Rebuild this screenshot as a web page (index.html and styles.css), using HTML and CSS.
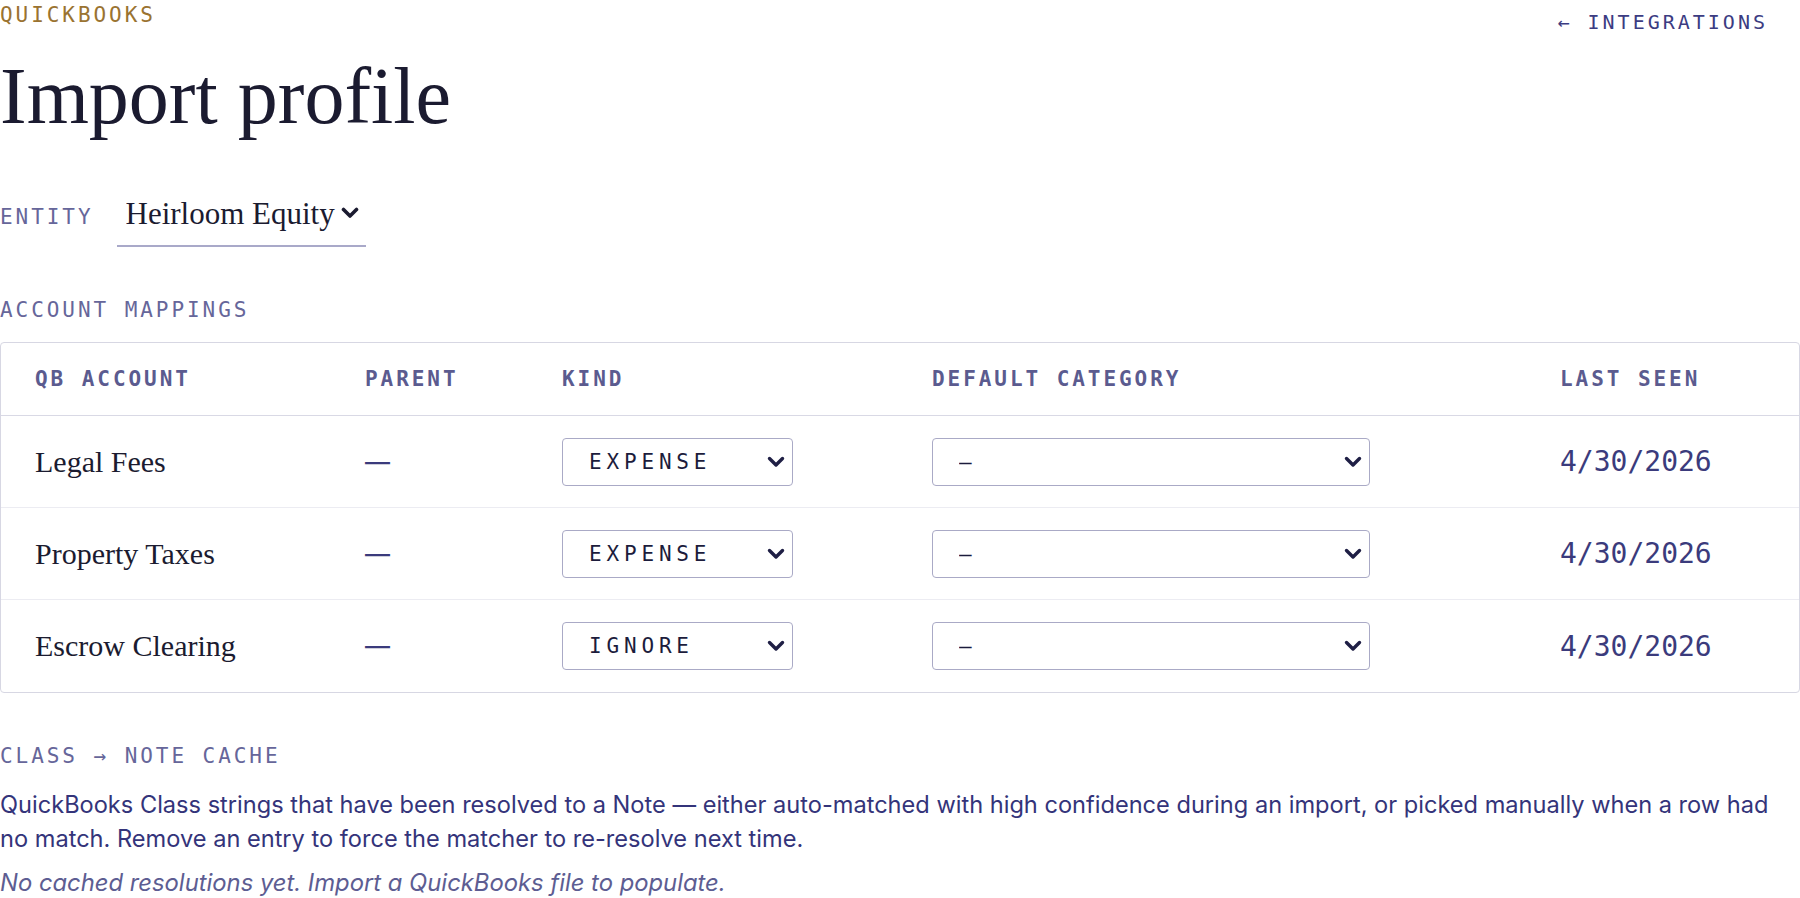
FILE: index.html
```html
<!DOCTYPE html>
<html>
<head>
<meta charset="utf-8">
<meta name="viewport" content="width=device-width, initial-scale=1">
<title>Import profile</title>
<link rel="stylesheet" href="styles.css">
</head>
<body>
<div class="page">

  <div class="topbar">
    <div class="eyebrow">QuickBooks</div>
    <a class="back-link" href="#">&larr; Integrations</a>
  </div>
  <h1 class="title">Import profile</h1>

  <div class="entity">
    <span class="label">Entity</span>
    <label class="entity__select">
      <select>
        <option>Heirloom Equity</option>
      </select>
      <svg class="chevron" width="18" height="12" viewBox="0 0 18 12"><path d="M2.5 2.5 L9 9 L15.5 2.5" fill="none" stroke="#1b1b30" stroke-width="3.6" stroke-linecap="round" stroke-linejoin="round"/></svg>
    </label>
  </div>

  <div class="label section-label">Account mappings</div>
  <table class="mappings">
    <thead>
      <tr>
        <th class="col-account">QB Account</th>
        <th class="col-parent">Parent</th>
        <th class="col-kind">Kind</th>
        <th class="col-category">Default category</th>
        <th>Last seen</th>
      </tr>
    </thead>
    <tbody>
      <tr>
        <td class="account-name">Legal Fees</td>
        <td class="none">&mdash;</td>
        <td>
          <label class="picker picker--kind">
            <select><option>Expense</option><option>Income</option><option>Ignore</option></select>
            <svg class="chevron" width="18" height="12" viewBox="0 0 18 12"><path d="M2.5 2.5 L9 9 L15.5 2.5" fill="none" stroke="#1f1f45" stroke-width="3.4" stroke-linecap="round" stroke-linejoin="round"/></svg>
          </label>
        </td>
        <td>
          <label class="picker picker--category">
            <select><option>&ndash;</option></select>
            <svg class="chevron" width="18" height="12" viewBox="0 0 18 12"><path d="M2.5 2.5 L9 9 L15.5 2.5" fill="none" stroke="#1f1f45" stroke-width="3.4" stroke-linecap="round" stroke-linejoin="round"/></svg>
          </label>
        </td>
        <td class="seen">4/30/2026</td>
      </tr>
      <tr>
        <td class="account-name">Property Taxes</td>
        <td class="none">&mdash;</td>
        <td>
          <label class="picker picker--kind">
            <select><option>Expense</option><option>Income</option><option>Ignore</option></select>
            <svg class="chevron" width="18" height="12" viewBox="0 0 18 12"><path d="M2.5 2.5 L9 9 L15.5 2.5" fill="none" stroke="#1f1f45" stroke-width="3.4" stroke-linecap="round" stroke-linejoin="round"/></svg>
          </label>
        </td>
        <td>
          <label class="picker picker--category">
            <select><option>&ndash;</option></select>
            <svg class="chevron" width="18" height="12" viewBox="0 0 18 12"><path d="M2.5 2.5 L9 9 L15.5 2.5" fill="none" stroke="#1f1f45" stroke-width="3.4" stroke-linecap="round" stroke-linejoin="round"/></svg>
          </label>
        </td>
        <td class="seen">4/30/2026</td>
      </tr>
      <tr>
        <td class="account-name">Escrow Clearing</td>
        <td class="none">&mdash;</td>
        <td>
          <label class="picker picker--kind">
            <select><option>Ignore</option><option>Expense</option><option>Income</option></select>
            <svg class="chevron" width="18" height="12" viewBox="0 0 18 12"><path d="M2.5 2.5 L9 9 L15.5 2.5" fill="none" stroke="#1f1f45" stroke-width="3.4" stroke-linecap="round" stroke-linejoin="round"/></svg>
          </label>
        </td>
        <td>
          <label class="picker picker--category">
            <select><option>&ndash;</option></select>
            <svg class="chevron" width="18" height="12" viewBox="0 0 18 12"><path d="M2.5 2.5 L9 9 L15.5 2.5" fill="none" stroke="#1f1f45" stroke-width="3.4" stroke-linecap="round" stroke-linejoin="round"/></svg>
          </label>
        </td>
        <td class="seen">4/30/2026</td>
      </tr>
    </tbody>
  </table>

  <div class="label section-label section-label--cache">Class &rarr; Note cache</div>
  <p class="note">QuickBooks Class strings that have been resolved to a Note &mdash; either auto-matched with high confidence during an import, or picked manually when a row had no match. Remove an entry to force the matcher to re-resolve next time.</p>
  <p class="empty">No cached resolutions yet. Import a QuickBooks file to populate.</p>

</div>
</body>
</html>
```

FILE: styles.css
```css
*,
*::before,
*::after {
  box-sizing: border-box;
}

body {
  margin: 0;
  background: #fff;
  color: #1b1b30;
  font-family: "Inter", "Noto Sans", sans-serif;
}

.page {
  padding-top: 3px;
}

/* top line */
.topbar {
  display: flex;
  justify-content: space-between;
  align-items: flex-start;
}

.eyebrow,
.label,
.back-link {
  font-family: "DejaVu Sans Mono", monospace;
  font-size: 21px;
  line-height: 24px;
  letter-spacing: 0.14em;
  text-transform: uppercase;
}

.eyebrow {
  color: #9a7331;
}

.back-link {
  margin-top: 7px;
  margin-right: 32px;
  font-size: 20px;
  letter-spacing: 0.15em;
  color: #3c3c82;
  text-decoration: none;
}

.title {
  margin: 19px 0 0;
  font-family: "Liberation Serif", serif;
  font-size: 80px;
  font-weight: 400;
  line-height: 86px;
  color: #1b1b30;
}

/* entity picker */
.entity {
  display: flex;
  align-items: baseline;
  gap: 23px;
  margin-top: 52px;
}

.label {
  color: #66669a;
}

.entity__select {
  display: inline-flex;
  align-items: center;
  gap: 5px;
  padding: 4px 7px 14px 9px;
  border-bottom: 2px solid #a9a9c9;
}

.entity__select select {
  appearance: none;
  height: 36px;
  margin: 0;
  padding: 0;
  border: 0;
  background: none;
  font-family: "Liberation Serif", serif;
  font-size: 31px;
  color: #1b1b30;
  outline: none;
}

.section-label {
  display: block;
  margin: 51px 0 20px;
}

/* mappings table */
.mappings {
  width: 100%;
  table-layout: fixed;
  border-collapse: separate;
  border-spacing: 0;
  border: 1.5px solid #d7d7e3;
  border-radius: 4px;
}

.mappings th {
  height: 73px;
  padding: 0;
  border-bottom: 1.5px solid #d9d9e5;
  text-align: left;
  vertical-align: middle;
  font-family: "DejaVu Sans Mono", monospace;
  font-size: 21px;
  font-weight: 700;
  letter-spacing: 0.14em;
  text-transform: uppercase;
  color: #5b5b8f;
}

.mappings td {
  height: 92px;
  padding: 0;
  border-bottom: 1px solid #ececf2;
  vertical-align: middle;
}

.mappings tbody tr:last-child td {
  border-bottom: 0;
}

.mappings th:first-child,
.mappings td:first-child {
  padding-left: 34px;
}

.col-account { width: 364px; }
.col-parent { width: 197px; }
.col-kind { width: 370px; }
.col-category { width: 628px; }

.account-name {
  font-family: "Liberation Serif", serif;
  font-size: 30px;
  color: #1b1b30;
}

.none {
  font-family: "Inter", sans-serif;
  font-size: 25px;
  font-weight: 500;
  color: #3b3b7c;
}

.picker {
  display: flex;
  align-items: center;
  height: 48px;
  padding: 0 7px 0 26px;
  border: 1.5px solid #aaaac6;
  border-radius: 4px;
  background: #fff;
}

.picker--kind { width: 231px; }
.picker--category { width: 438px; }

.picker select {
  flex: 1;
  appearance: none;
  min-width: 0;
  margin: 0;
  padding: 0;
  border: 0;
  background: none;
  font-family: "DejaVu Sans Mono", monospace;
  font-size: 21px;
  letter-spacing: 0.23em;
  text-transform: uppercase;
  color: #1c1c3c;
  outline: none;
}

.chevron {
  flex: none;
  display: block;
}

.seen {
  font-family: "DejaVu Sans Mono", monospace;
  font-size: 28px;
  color: #3b3b7c;
}

/* cache section */
.section-label--cache {
  margin: 51px 0 0;
}

.note {
  max-width: 1790px;
  margin: 20px 0 0;
  font-size: 23.6px;
  line-height: 34px;
  color: #34347a;
}

.empty {
  margin: 10px 0 0;
  font-size: 23.8px;
  line-height: 34px;
  font-style: italic;
  color: #5d5d92;
}
```
